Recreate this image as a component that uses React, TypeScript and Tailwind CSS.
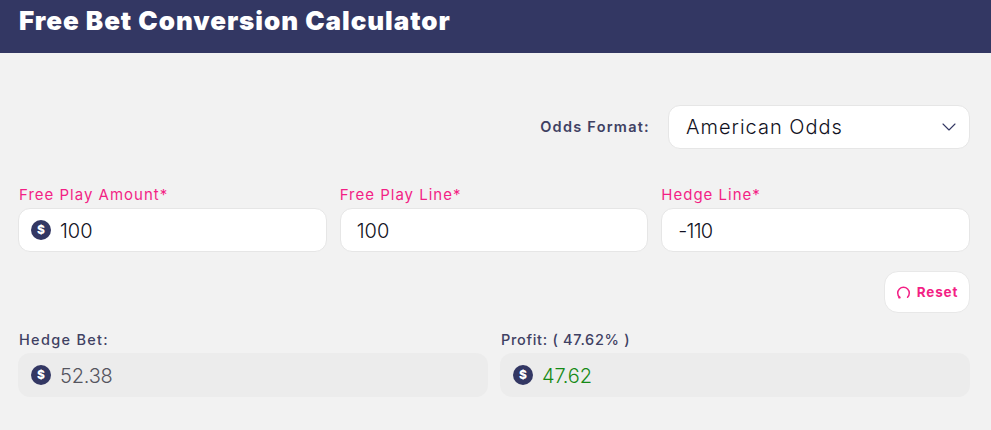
import React from 'react';
import { ChevronDown } from 'lucide-react';

const font = "font-['Inter',sans-serif]";

function DollarIcon() {
  return (
    <span className={`flex h-5 w-5 shrink-0 items-center justify-center rounded-full bg-[#333763] text-[12px] leading-none font-extrabold text-white ${font}`}>
      $
    </span>
  );
}

function Field({ label, value, icon, tight }: { label: string; value: string; icon?: boolean; tight?: boolean }) {
  return (
    <div className="flex min-w-0 flex-1 flex-col">
      <label className={`mb-[3px] h-[21px] text-[15px] leading-[21px] tracking-[1px] text-[#f31f85] ${icon ? 'pl-[1px]' : ''}`}>{label}</label>
      <div className="flex h-[44px] items-center gap-[9px] rounded-[12px] border border-[#e6e6e6] bg-white pr-3 pl-[12px]">
        {icon && <DollarIcon />}
        <span className={`pt-[1px] text-[20px] font-light text-[#111122] ${icon ? '' : 'pl-[4px]'} ${tight ? 'tracking-[-0.8px]' : ''}`}>{value}</span>
      </div>
    </div>
  );
}

function Result({ label, value, color, labelClass }: { label: string; value: string; color: string; labelClass: string }) {
  return (
    <div className="flex min-w-0 flex-1 flex-col">
      <div className={`mb-[3px] h-[21px] pl-[1px] text-[14.5px] leading-[21px] font-medium ${labelClass} text-[#3f4163]`}>{label}</div>
      <div className="flex h-[44px] items-center gap-[9px] rounded-[12px] bg-[#ececec] pl-[13px]">
        <DollarIcon />
        <span className={`pt-[1px] text-[20px] font-light tracking-[-0.2px] ${color}`}>{value}</span>
      </div>
    </div>
  );
}

export default function App() {
  return (
    <div className={`h-[430px] w-[991px] overflow-hidden bg-[#f2f2f2] ${font}`}>
      <header className="h-[53px] bg-[#333763] pl-[19px]">
        <h1 className="pt-[3px] text-[26px] leading-[36px] font-black tracking-[0.95px] text-white">Free Bet Conversion Calculator</h1>
      </header>

      <main className="px-[18px] pt-[52px]">
        <div className="flex items-center justify-end gap-[18px] pr-[3px]">
          <span className="text-[14.5px] font-semibold tracking-[1.25px] text-[#3f4163]">Odds Format:</span>
          <div className="flex h-[44px] w-[302px] items-center justify-between rounded-[12px] border border-[#e6e6e6] bg-white pr-[8px] pl-[17px]">
            <span className="text-[20px] font-light tracking-[1px] text-[#111122]">American Odds</span>
            <ChevronDown size={24} strokeWidth={1.1} className="text-[#333763]" />
          </div>
        </div>

        <div className="mt-[35px] flex gap-[13px] pr-[3px]">
          <Field label="Free Play Amount*" value="100" icon />
          <Field label="Free Play Line*" value="100" />
          <Field label="Hedge Line*" value="-110" tight />
        </div>

        <div className="mt-[19px] flex justify-end pr-[3px]">
          <button className="flex h-[42px] w-[86px] items-center justify-center gap-[6px] rounded-[14px] border border-[#e8e8e8] bg-white text-[13.5px] font-bold tracking-[0.85px] text-[#f31f85]">
            <svg width="15" height="15" viewBox="0 0 14 14" fill="none" stroke="currentColor" strokeWidth="1.4" strokeLinecap="round">
              <path d="M3.2 11.4A5.4 5.4 0 1 1 10.8 11.4" />
              <circle cx="3.2" cy="11.6" r="1.1" fill="currentColor" stroke="none" />
            </svg>
            Reset
          </button>
        </div>

        <div className="mt-[16px] flex gap-[12px] pr-[3px]">
          <Result label="Hedge Bet:" value="52.38" color="text-[#55555f]" labelClass="tracking-[1.3px]" />
          <Result label="Profit: ( 47.62% )" value="47.62" color="text-[#168a16]" labelClass="tracking-[0.7px]" />
        </div>
      </main>
    </div>
  );
}
